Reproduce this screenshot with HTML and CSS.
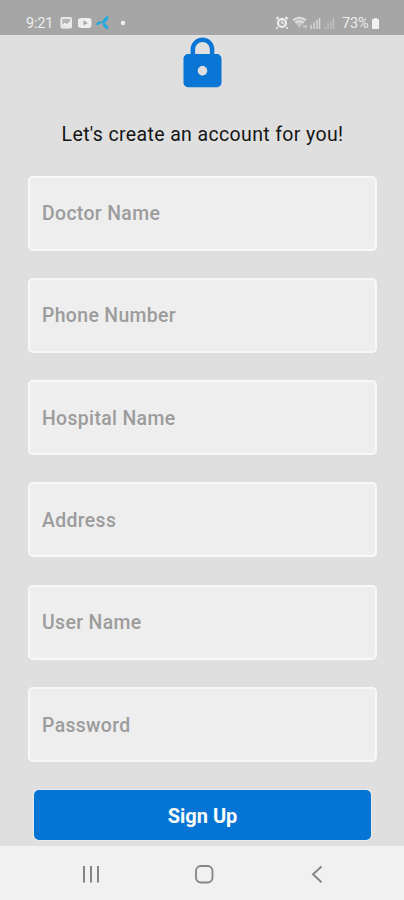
FILE: index.html
```html
<!DOCTYPE html>
<html lang="en">
<head>
<meta charset="utf-8">
<title>Sign Up</title>
<link rel="stylesheet" href="styles.css">
</head>
<body>
<header class="status">
  <span class="time">9:21</span>
  <svg class="status-left" width="70" height="16" viewBox="0 0 70 16">
    <rect x="1.500" y="2" width="11.500" height="11.500" rx="2" fill="#eee"/>
    <rect x="3.300" y="3.800" width="8" height="8" fill="#b4b4b4"/>
    <path d="M3.300 11.800V10l2.600-2.500 1.800 1.800 3.600-3.300v5.800z" fill="#eee"/>
    <rect x="19" y="3" width="13.500" height="10" rx="3" fill="#eee"/>
    <path d="M24.500 5.500v5l4.300-2.500z" fill="#a5a5a5"/>
    <path d="M37.500 8.500c2-2.500 5-3 7.500-1.500-2 .3-4 1.500-6 3-1.500.5-2.300-.5-1.500-1.500zM43.500 7.500c.5-3.500 2.500-6 5.500-6.500 1 2-.5 4.500-3.500 7zM43.500 7.500c3.500.5 5.500 3.500 6 6.500-3 .5-5.500-2-6-6.500z" fill="#20aae0"/>
    <circle cx="64" cy="8" r="2.200" fill="#f0f0f0"/>
  </svg>
  <svg class="status-right" width="64" height="16" viewBox="0 0 64 16">
    <path d="M1.500 4l2-2M12.500 4l-2-2" stroke="#eee" stroke-width="2"/>
    <circle cx="7" cy="8" r="4" fill="#aaa" stroke="#eee" stroke-width="2.200"/>
    <path d="M7 5.500V8l1.700 1" stroke="#eee" stroke-width="1.300" fill="none"/>
    <path d="M2 12v2M12 12v2" stroke="#eee" stroke-width="1.500"/>
    <path d="M18 5q6.500-5 13 0l-6.500 8z" fill="#c4c4c4"/>
    <path d="M18 5q6.500-5 13 0M20.500 8q4-3 8 0" fill="none" stroke="#e6e6e6" stroke-width="1.400"/>
    <path d="M29 10v3M31 10v3" stroke="#ddd"/>
    <path d="M36 10v4M39 7.500V14M42 5v9M44.500 3v11" stroke="#d6d6d6" stroke-width="1.500"/>
    <path d="M50 11.500V14M53 8v6M56 6v8M58.500 3v11" stroke="#c2c2c2" stroke-width="1.300"/>
  </svg>
  <span class="percent">73%</span>
  <svg class="battery" width="9" height="13" viewBox="0 0 9 13">
    <path d="M3 1h3v1.500H3z" fill="#eee"/>
    <rect x="1" y="2" width="7" height="10" rx="1" fill="#f2f2f2"/>
  </svg>
</header>
<main class="page">
  <svg class="lock" viewBox="0 0 24 24" fill="#0975d4">
    <path d="M18 8h-1V6c0-2.760-2.240-5-5-5S7 3.240 7 6v2H6c-1.100 0-2 .9-2 2v10c0 1.100.9 2 2 2h12c1.100 0 2-.9 2-2V10c0-1.100-.9-2-2-2zm-6 9c-1.100 0-2-.9-2-2s.9-2 2-2 2 .9 2 2-.9 2-2 2zm3.100-9H8.900V6c0-1.710 1.390-3.100 3.100-3.100s3.100 1.390 3.100 3.100v2z"/>
  </svg>
  <h1 class="title">Let's create an account for you!</h1>
  <form class="form">
    <div class="field">Doctor Name</div>
    <div class="field">Phone Number</div>
    <div class="field">Hospital Name</div>
    <div class="field">Address</div>
    <div class="field">User Name</div>
    <div class="field">Password</div>
    <button class="submit" type="button">Sign Up</button>
  </form>
</main>
<nav class="navbar">
  <svg width="24" height="24" viewBox="0 0 24 24"><path d="M5 4v16.500M12 4v16.500M19 4v16.500" stroke="#848484" stroke-width="2"/></svg>
  <svg width="24" height="24" viewBox="0 0 24 24"><rect x="4" y="4" width="16.500" height="16.500" rx="5" fill="none" stroke="#848484" stroke-width="1.800"/></svg>
  <svg width="24" height="24" viewBox="0 0 24 24"><path d="M16.500 4.500L8 12.300l8.500 7.900" fill="none" stroke="#848484" stroke-width="1.900"/></svg>
</nav>
</body>
</html>
```
FILE: styles.css
```css
* { box-sizing: border-box; }
body {
  margin: 0;
  height: 900px;
  display: flex;
  flex-direction: column;
  overflow: hidden;
  background: #dfdfdf;
  font-family: Roboto, sans-serif;
}
.status {
  height: 35px;
  flex: none;
  display: flex;
  align-items: center;
  padding: 11px 24px 0 26px;
  background: #a6a6a6;
  color: #ececec;
  font-size: 14.5px;
}
.time { width: 33px; letter-spacing: -0.2px; }
.status-right { margin-left: auto; }
.percent { width: 29px; margin-left: 3px; letter-spacing: -0.2px; }
.page {
  flex: 1;
  min-height: 0;
  display: flex;
  flex-direction: column;
  align-items: center;
}
.lock { width: 57px; height: 57px; flex: none; margin-left: 1px; }
.title {
  margin: 31px 0 0 1px;
  height: 24px;
  line-height: 24px;
  font-size: 19.5px;
  font-weight: 400;
  letter-spacing: 0.36px;
  color: #151515;
  white-space: nowrap;
}
.form {
  width: 349px;
  margin-top: 28.6px;
  margin-left: 1px;
  display: flex;
  flex-direction: column;
  gap: 27.3px;
}
.field {
  height: 75px;
  padding: 1px 0 0 12px;
  display: flex;
  align-items: center;
  background: #eee;
  border: 2px solid #f8f8f8;
  border-radius: 5px;
  color: #9c9c9c;
  font-size: 19.4px;
  font-weight: 500;
  letter-spacing: 0.36px;
}
.submit {
  width: 337px;
  height: 50px;
  margin: 1px auto 0;
  padding: 1px 0 0;
  border: 0;
  border-radius: 5px;
  background: #0475d5;
  box-shadow: 0 0 1px 1px #e6ebef;
  color: #fff;
  font: 700 20px Roboto, sans-serif;
}
.navbar {
  height: 54px;
  flex: none;
  display: flex;
  align-items: center;
  justify-content: space-between;
  padding: 2px 75px 0 79px;
  background: #f1f1f1;
}
```
